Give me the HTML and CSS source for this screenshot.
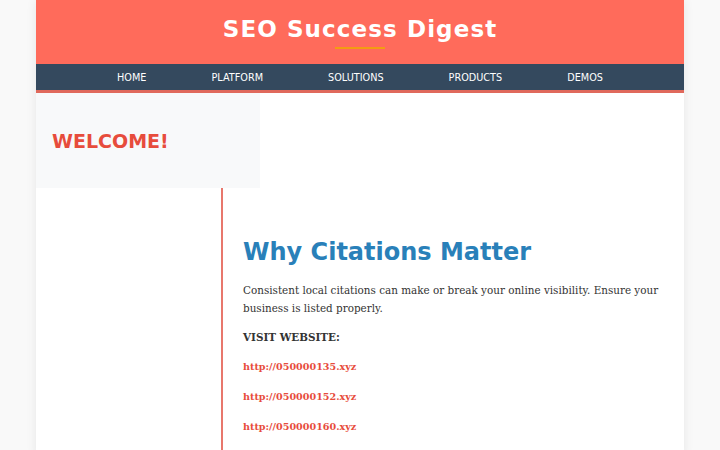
FILE: index.html
```html
<!DOCTYPE html>
<html lang="en">
<head>
    <meta charset="UTF-8">
    <meta name="viewport" content="width=device-width, initial-scale=1.0">
    <title>SEO Success Digest</title>
    <link rel="stylesheet" href="styles.css">
</head>
<body>
    <div class="page">
        <header class="site-header">
            <h1>SEO Success Digest</h1>
        </header>

        <nav class="main-nav">
            <a href="#">HOME</a>
            <a href="#">PLATFORM</a>
            <a href="#">SOLUTIONS</a>
            <a href="#">PRODUCTS</a>
            <a href="#">DEMOS</a>
        </nav>

        <aside class="sidebar">
            <h2>WELCOME!</h2>
        </aside>

        <main class="content">
            <h2>Why Citations Matter</h2>
            <p>Consistent local citations can make or break your online visibility. Ensure your business is listed properly.</p>
            <p class="visit">VISIT WEBSITE:</p>
            <p><a href="#">http://050000135.xyz</a></p>
            <p><a href="#">http://050000152.xyz</a></p>
            <p><a href="#">http://050000160.xyz</a></p>
        </main>
    </div>
</body>
</html>
```

FILE: styles.css
```css
body {
    margin: 0;
    background-color: #f9f9f9;
    font-family: "DejaVu Serif", serif;
    color: #333;
}
.page {
    width: 648px;
    margin: 0 auto;
    min-height: 450px;
    background: white;
    box-shadow: 0 0 10px rgba(0,0,0,0.08);
}
.site-header {
    background-color: #ff6b5b;
    height: 64px;
    display: flex;
    flex-direction: column;
    align-items: center;
    padding-top: 16px;
    box-sizing: border-box;
}
.site-header h1 {
    margin: 0;
    font-family: "DejaVu Sans", sans-serif;
    font-size: 23px;
    letter-spacing: 1.1px;
    color: white;
    line-height: 26px;
}
.site-header h1::after {
    content: "";
    display: block;
    width: 50px;
    height: 2px;
    margin: 5px auto 0;
    background-color: #f39c12;
}
.main-nav {
    background-color: #34495e;
    height: 26px;
    border-bottom: 3px solid #e0695c;
    display: flex;
    justify-content: center;
    gap: 65px;
    align-items: center;
}
.main-nav a {
    color: white;
    text-decoration: none;
    font-family: "DejaVu Sans", sans-serif;
    font-size: 9.7px;
}
.sidebar {
    width: 224px;
    height: 95px;
    background-color: #f8f9fa;
    display: flex;
    align-items: center;
    padding-left: 16px;
    box-sizing: border-box;
}
.sidebar h2 {
    margin: 0;
    font-family: "DejaVu Sans", sans-serif;
    font-size: 19px;
    color: #e74c3c;
}
.content {
    margin-left: 185px;
    border-left: 2px solid #e8776c;
    padding: 49px 20px 10px 20px;
}
.content h2 {
    margin: 0 0 14px;
    font-family: "DejaVu Sans", sans-serif;
    font-size: 24px;
    line-height: 30px;
    color: #2980b9;
}
.content p {
    margin: 0 0 11px;
    font-size: 10.4px;
    line-height: 18px;
}
.content .visit {
    font-weight: bold;
}
.content a {
    color: #e74c3c;
    font-weight: bold;
    font-size: 9.6px;
    text-decoration: none;
}
```
